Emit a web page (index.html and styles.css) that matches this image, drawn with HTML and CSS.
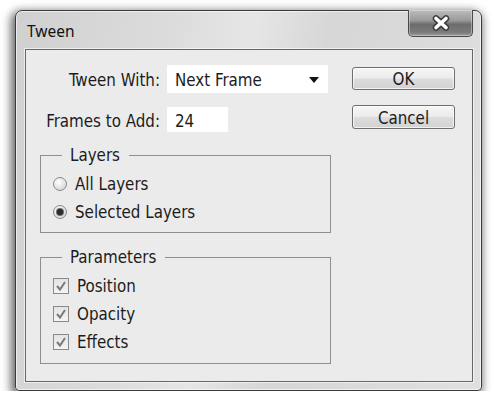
FILE: index.html
```html
<!DOCTYPE html>
<html>
<head>
<meta charset="utf-8">
<link rel="stylesheet" href="styles.css">
</head>
<body>
<div class="window">
  <div class="titlebar">
    <span class="title">Tween</span>
    <div class="close">
      <svg width="22" height="16" viewBox="0 0 22 16">
        <path d="M6 3.5 L16 12.5 M16 3.5 L6 12.5" stroke="#3c3c3c" stroke-width="6.5" stroke-linecap="round"/>
        <path d="M6 3.5 L16 12.5 M16 3.5 L6 12.5" stroke="#ffffff" stroke-width="3.6" stroke-linecap="round"/>
      </svg>
    </div>
  </div>
  <div class="client">
    <div class="main">
      <div class="row">
        <span class="lbl">Tween With:</span>
        <div class="select">
          <span>Next Frame</span>
          <svg width="10" height="6" viewBox="0 0 10 6"><path d="M0 0 H10 L5 6 Z" fill="#111"/></svg>
        </div>
      </div>
      <div class="row row2">
        <span class="lbl">Frames to Add:</span>
        <div class="input">24</div>
      </div>
      <fieldset class="group layers">
        <legend>Layers</legend>
        <div class="opt"><span class="radio"></span>All Layers</div>
        <div class="opt"><span class="radio on"></span>Selected Layers</div>
      </fieldset>
      <fieldset class="group params">
        <legend>Parameters</legend>
        <div class="opt"><span class="check"><svg width="12" height="12" viewBox="0 0 12 12"><path d="M2 6 L5 9.5 L10 2" fill="none" stroke="#7a7a7a" stroke-width="2"/></svg></span>Position</div>
        <div class="opt"><span class="check"><svg width="12" height="12" viewBox="0 0 12 12"><path d="M2 6 L5 9.5 L10 2" fill="none" stroke="#7a7a7a" stroke-width="2"/></svg></span>Opacity</div>
        <div class="opt"><span class="check"><svg width="12" height="12" viewBox="0 0 12 12"><path d="M2 6 L5 9.5 L10 2" fill="none" stroke="#7a7a7a" stroke-width="2"/></svg></span>Effects</div>
      </fieldset>
    </div>
    <div class="side">
      <div class="btn ok">OK</div>
      <div class="btn cancel">Cancel</div>
    </div>
  </div>
</div>
</body>
</html>
```

FILE: styles.css
```css
html, body {
  margin: 0;
  background: #ffffff;
}
body {
  padding: 10px 0 0 15px;
  font-family: "DejaVu Sans Condensed", "DejaVu Sans", sans-serif;
  font-size: 16.8px;
  color: #1c1c1c;
}
.window {
  box-sizing: border-box;
  width: 467px;
  height: 381px;
  border: 1px solid #3a3a3a;
  border-radius: 7px 7px 4px 4px;
  background: linear-gradient(100deg, #d0d0d0 0%, #dcdcdc 30%, #e6e6e6 45%, #d6d6d6 60%, #e0e0e0 100%);
  box-shadow: inset 0 0 0 1px rgba(255,255,255,0.6), -2px 3px 10px 2px rgba(0,0,0,0.6);
  display: flex;
  flex-direction: column;
}
.titlebar {
  height: 38px;
  display: flex;
  align-items: center;
  justify-content: space-between;
  padding-left: 11px;
}
.title {
  font-family: "Noto Sans", "Open Sans", sans-serif;
  font-size: 15.5px;
  color: #111;
  margin-top: 1px;
}
.close {
  align-self: flex-start;
  margin-top: -1px;
  margin-right: 8px;
  box-sizing: border-box;
  width: 65px;
  height: 27px;
  border: 1px solid #4a4a4a;
  border-top: none;
  border-radius: 0 0 5px 5px;
  background: linear-gradient(#bdbdbd 0%, #9a9a9a 40%, #6c6c6c 55%, #7a7a7a 85%, #9c9c9c 100%);
  box-shadow: inset 0 0 0 1px rgba(255,255,255,0.35);
  display: flex;
  align-items: center;
  justify-content: center;
}
.client {
  box-sizing: border-box;
  margin: 0 8px 8px 9px;
  flex: 1;
  border: 1px solid #666;
  background: #ebebeb;
  box-shadow: 0 0 0 1px rgba(255,255,255,0.6);
  display: flex;
}
.main {
  width: 326px;
  padding-top: 15px;
  display: flex;
  flex-direction: column;
}
.row {
  display: flex;
  align-items: center;
  gap: 7px;
}
.row2 {
  margin-top: 14px;
}
.lbl {
  width: 134px;
  text-align: right;
  margin-top: 2px;
}
.select {
  box-sizing: border-box;
  width: 161px;
  height: 28px;
  background: #fff;
  display: flex;
  align-items: center;
  justify-content: space-between;
  padding: 2px 9px 0 8px;
}
.input {
  box-sizing: border-box;
  width: 61px;
  height: 25px;
  background: #fff;
  padding: 2px 0 0 8px;
  display: flex;
  align-items: center;
}
.group {
  margin: 0 0 0 14px;
  width: 291px;
  box-sizing: border-box;
  border: 1px solid #8e8e8e;
  padding: 5px 0 6px 0;
}
.layers {
  margin-top: 13px;
}
.params {
  margin-top: 14px;
  padding-bottom: 7px;
}
.group legend {
  margin-left: 21px;
  padding: 0 9px 0 8px;
  line-height: 20px;
}
.opt {
  height: 28px;
  display: flex;
  align-items: center;
  padding-left: 12px;
  gap: 8px;
}
.radio {
  box-sizing: border-box;
  width: 14px;
  height: 14px;
  border-radius: 50%;
  border: 1px solid #8a8a8a;
  background: radial-gradient(circle at 40% 35%, #ffffff 0%, #e0e0e0 60%, #c8c8c8 100%);
  display: flex;
  align-items: center;
  justify-content: center;
}
.radio.on::after {
  content: "";
  width: 6px;
  height: 6px;
  border-radius: 50%;
  background: #2a2a2a;
  box-shadow: 0 0 0 1px #6a6a6a;
}
.check {
  box-sizing: border-box;
  width: 16px;
  height: 16px;
  border: 1px solid #8a8a8a;
  background: linear-gradient(#e4e4e4, #f4f4f4);
  display: flex;
  align-items: center;
  justify-content: center;
}
.side {
  padding-top: 17px;
  display: flex;
  flex-direction: column;
  gap: 15px;
}
.btn {
  box-sizing: border-box;
  width: 103px;
  height: 23px;
  border: 1px solid #6e6e6e;
  border-radius: 3px;
  background: linear-gradient(#f6f6f6 0%, #ebebeb 48%, #dcdcdc 52%, #d2d2d2 100%);
  box-shadow: inset 0 0 0 1px rgba(255,255,255,0.7);
  display: flex;
  align-items: center;
  justify-content: center;
  padding-top: 1px;
}
.cancel {
  height: 24px;
}
```
